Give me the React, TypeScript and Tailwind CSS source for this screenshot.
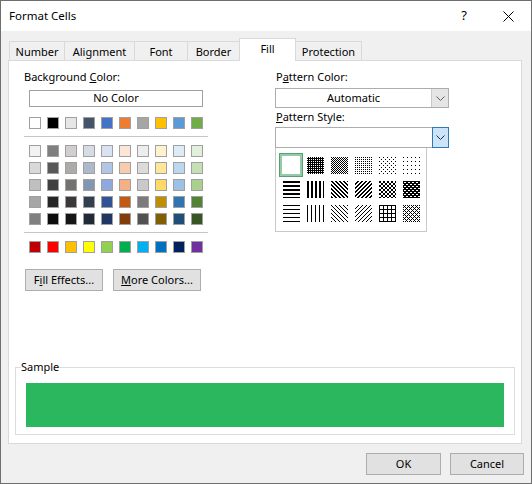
import React from "react";

const FONT = { fontFamily: '"Segoe UI", "Noto Sans", "Liberation Sans", sans-serif' };

const themeTop = ["#FFFFFF", "#000000", "#E7E6E6", "#44546A", "#4472C4", "#ED7D31", "#A5A5A5", "#FFC000", "#5B9BD5", "#70AD47"];

const themeShades = [
  ["#F2F2F2", "#7F7F7F", "#D0CECE", "#D6DCE4", "#D9E1F2", "#FCE4D6", "#EDEDED", "#FFF2CC", "#DDEBF7", "#E2EFDA"],
  ["#D9D9D9", "#595959", "#AEAAAA", "#ACB9CA", "#B4C6E7", "#F8CBAD", "#DBDBDB", "#FFE699", "#BDD7EE", "#C6E0B4"],
  ["#BFBFBF", "#404040", "#757171", "#8497B0", "#8EA9DB", "#F4B084", "#C9C9C9", "#FFD966", "#9BC2E6", "#A9D08E"],
  ["#A6A6A6", "#262626", "#3A3838", "#333F4F", "#305496", "#C65911", "#7B7B7B", "#BF8F00", "#2F75B5", "#548235"],
  ["#808080", "#0D0D0D", "#161616", "#222B35", "#203764", "#833C0C", "#525252", "#806000", "#1F4E78", "#375623"],
];

const standard = ["#C00000", "#FF0000", "#FFC000", "#FFFF00", "#92D050", "#00B050", "#00B0F0", "#0070C0", "#002060", "#7030A0"];

const tabs = [
  { label: "Number", w: "w-[56px]" },
  { label: "Alignment", w: "w-[71px]" },
  { label: "Font", w: "w-[54px]" },
  { label: "Border", w: "w-[53px]" },
  { label: "Fill", w: "w-[57px]" },
  { label: "Protection", w: "w-[67px]" },
];

// pixel patterns: tile size, background, and the pixels drawn in the other colour
type Pat = { w: number; h: number; bg: string; fg: string; px: number[][] };

const patterns: Pat[] = [
  { w: 2, h: 2, bg: "#000", fg: "#fff", px: [[0, 0, 1, 1]] },
  { w: 2, h: 2, bg: "#fff", fg: "#000", px: [[0, 0, 1, 1], [1, 1, 1, 1]] },
  { w: 2, h: 2, bg: "#fff", fg: "#000", px: [[0, 0, 1, 1]] },
  { w: 4, h: 4, bg: "#fff", fg: "#000", px: [[0, 0, 1, 1], [2, 2, 1, 1]] },
  { w: 4, h: 4, bg: "#fff", fg: "#000", px: [[0, 0, 1, 1]] },
  { w: 4, h: 4, bg: "#fff", fg: "#000", px: [[0, 0, 4, 2]] },
  { w: 4, h: 4, bg: "#fff", fg: "#000", px: [[0, 0, 2, 4]] },
  { w: 4, h: 4, bg: "#fff", fg: "#000", px: [[0, 0, 2, 1], [1, 1, 2, 1], [2, 2, 2, 1], [3, 3, 1, 1], [0, 3, 1, 1]] },
  { w: 4, h: 4, bg: "#fff", fg: "#000", px: [[2, 0, 2, 1], [1, 1, 2, 1], [0, 2, 2, 1], [0, 3, 1, 1], [3, 3, 1, 1]] },
  { w: 4, h: 4, bg: "#fff", fg: "#000", px: [[0, 0, 2, 2], [2, 2, 2, 2]] },
  { w: 4, h: 4, bg: "#000", fg: "#fff", px: [[1, 1, 2, 1], [3, 3, 1, 1], [0, 3, 1, 1]] },
  { w: 4, h: 4, bg: "#fff", fg: "#000", px: [[0, 0, 4, 1]] },
  { w: 4, h: 4, bg: "#fff", fg: "#000", px: [[0, 0, 1, 4]] },
  { w: 4, h: 4, bg: "#fff", fg: "#000", px: [[0, 0, 1, 1], [1, 1, 1, 1], [2, 2, 1, 1], [3, 3, 1, 1]] },
  { w: 4, h: 4, bg: "#fff", fg: "#000", px: [[3, 0, 1, 1], [2, 1, 1, 1], [1, 2, 1, 1], [0, 3, 1, 1]] },
  { w: 4, h: 4, bg: "#fff", fg: "#000", px: [[0, 0, 4, 1], [0, 0, 1, 4]] },
  { w: 4, h: 4, bg: "#fff", fg: "#000", px: [[0, 0, 1, 1], [2, 0, 1, 1], [1, 1, 1, 1], [0, 2, 1, 1], [2, 2, 1, 1], [3, 3, 1, 1]] },
];

function Swatch({ color }: { color: string }) {
  return <div className="w-[12px] h-[12px] border border-[#a0a0a0]" style={{ backgroundColor: color }} />;
}

function SwatchRow({ colors }: { colors: string[] }) {
  return (
    <div className="flex gap-[6px] ml-[5px]">
      {colors.map((c, i) => (
        <Swatch key={i} color={c} />
      ))}
    </div>
  );
}

function PatternTile({ p, id }: { p: Pat; id: string }) {
  return (
    <svg width="17" height="17" shapeRendering="crispEdges">
      <defs>
        <pattern id={id} width={p.w} height={p.h} patternUnits="userSpaceOnUse">
          <rect width={p.w} height={p.h} fill={p.bg} />
          {p.px.map((r, i) => (
            <rect key={i} x={r[0]} y={r[1]} width={r[2]} height={r[3]} fill={p.fg} />
          ))}
        </pattern>
      </defs>
      <rect width="17" height="17" fill={`url(#${id})`} />
    </svg>
  );
}

function Chevron({ color = "#606060" }: { color?: string }) {
  return (
    <svg width="9" height="5" viewBox="0 0 9 5">
      <polyline points="0.5,0.5 4.5,4.5 8.5,0.5" fill="none" stroke={color} strokeWidth="1" />
    </svg>
  );
}

function Button({ children, w }: { children: React.ReactNode; w: string }) {
  return (
    <div className={`${w} h-[22px] flex items-center justify-center bg-[#e1e1e1] border border-[#adadad] text-[11px] text-black`}>
      {children}
    </div>
  );
}

export default function App() {
  return (
    <div className="w-[532px] h-[484px] flex flex-col bg-[#f0f0f0] border border-[#6f6f6f] text-black select-none" style={FONT}>
      {/* title bar */}
      <div className="h-[30px] bg-white flex items-center pl-[8px]">
        <span className="text-[11.5px]">Format Cells</span>
        <span className="ml-auto text-[13px] mr-[36px]">?</span>
        <svg width="11" height="11" viewBox="0 0 11 11" className="mr-[17px]">
          <path d="M0.5 0.5L10.5 10.5M10.5 0.5L0.5 10.5" stroke="#000" strokeWidth="1" />
        </svg>
      </div>

      {/* tabs */}
      <div className="h-[29px] flex items-end pl-[8px]">
        {tabs.map((t, i) =>
          t.label === "Fill" ? (
            <div
              key={t.label}
              className={`${t.w} -ml-px h-[23px] -mb-px relative z-10 bg-white border border-b-0 border-[#d9d9d9] flex items-center justify-center text-[11px] pb-[2px]`}
            >
              {t.label}
            </div>
          ) : (
            <div
              key={t.label}
              className={`${t.w} ${i === 0 ? "" : "-ml-px"} h-[19px] border border-b-0 border-[#d9d9d9] flex items-center justify-center text-[11px] pt-[2px]`}
            >
              {t.label}
            </div>
          )
        )}
      </div>

      {/* panel */}
      <div className="ml-[7px] w-[514px] h-[384px] bg-white border border-[#d9d9d9] flex flex-col">
        <div className="flex">
          {/* left column */}
          <div className="pl-[15px] pt-[8px] w-[216px] flex flex-col">
            <div className="h-[16px] leading-[16px] text-[11px]">
              Background <span className="underline">C</span>olor:
            </div>
            <div className="ml-[5px] mt-[5px] w-[174px] h-[17px] border border-[#a0a0a0] flex items-center justify-center text-[11px]">
              No Color
            </div>
            <div className="mt-[10px]">
              <SwatchRow colors={themeTop} />
            </div>
            <div className="mt-[7px] w-[184px] h-px bg-[#c6c6c6]" />
            <div className="mt-[8px] flex flex-col gap-[5px]">
              {themeShades.map((row, i) => (
                <SwatchRow key={i} colors={row} />
              ))}
            </div>
            <div className="mt-[7px] w-[184px] h-px bg-[#c6c6c6]" />
            <div className="mt-[8px]">
              <SwatchRow colors={standard} />
            </div>
            <div className="mt-[16px] ml-[1px] flex gap-[10px]">
              <Button w="w-[78px]">
                F<span className="underline">i</span>ll Effects...
              </Button>
              <Button w="w-[88px]">
                <span className="underline">M</span>ore Colors...
              </Button>
            </div>
          </div>

          {/* right column */}
          <div className="ml-[50px] pt-[8px] flex flex-col">
            <div className="h-[16px] leading-[16px] text-[11px] pl-[1px]">
              P<span className="underline">a</span>ttern Color:
            </div>
            <div className="mt-[3px] w-[174px] h-[20px] border border-[#adadad] flex">
              <div className="flex-1 flex items-center justify-center text-[11px]">Automatic</div>
              <div className="w-[17px] bg-[#e5e5e5] border-l border-[#c9c9c9] flex items-center justify-center">
                <Chevron />
              </div>
            </div>
            <div className="mt-[1px] h-[16px] leading-[16px] text-[11px] pl-[1px]">
              <span className="underline">P</span>attern Style:
            </div>
            <div className="mt-[2px] w-[174px] h-[21px] border border-[#adadad] flex">
              <div className="flex-1" />
              <div className="w-[17px] -my-px -mr-px bg-[#cce4f7] border border-[#2f79b9] flex items-center justify-center">
                <Chevron color="#2c2c2c" />
              </div>
            </div>
            <div className="w-[152px] h-[84px] border border-t-0 border-[#c9c9c9] bg-white pt-[5px] pl-[3px]">
              <div className="grid grid-cols-[repeat(6,24px)] grid-rows-[repeat(3,24px)]">
                <div className="w-[24px] h-[24px] border border-[#5a9e78]">
                  <div className="w-full h-full border-2 border-[#92cba8] bg-white" />
                </div>
                {patterns.map((p, i) => (
                  <div key={i} className="w-[24px] h-[24px] flex items-center justify-center">
                    <PatternTile p={p} id={`pat${i}`} />
                  </div>
                ))}
              </div>
            </div>
          </div>
        </div>

        {/* sample group */}
        <div className="relative mt-auto mb-[8px] mx-[6px] h-[68px] border border-[#dcdcdc]">
          <span className="absolute -top-[9px] left-[5px] bg-white text-[11px] leading-[16px]">Sample</span>
          <div className="mt-[15px] mx-[10px] h-[44px] bg-[#2ab75d]" />
        </div>
      </div>

      {/* footer buttons */}
      <div className="mt-[9px] flex justify-end gap-[9px] pr-[7px]">
        <Button w="w-[75px]">OK</Button>
        <Button w="w-[74px]">Cancel</Button>
      </div>
    </div>
  );
}
